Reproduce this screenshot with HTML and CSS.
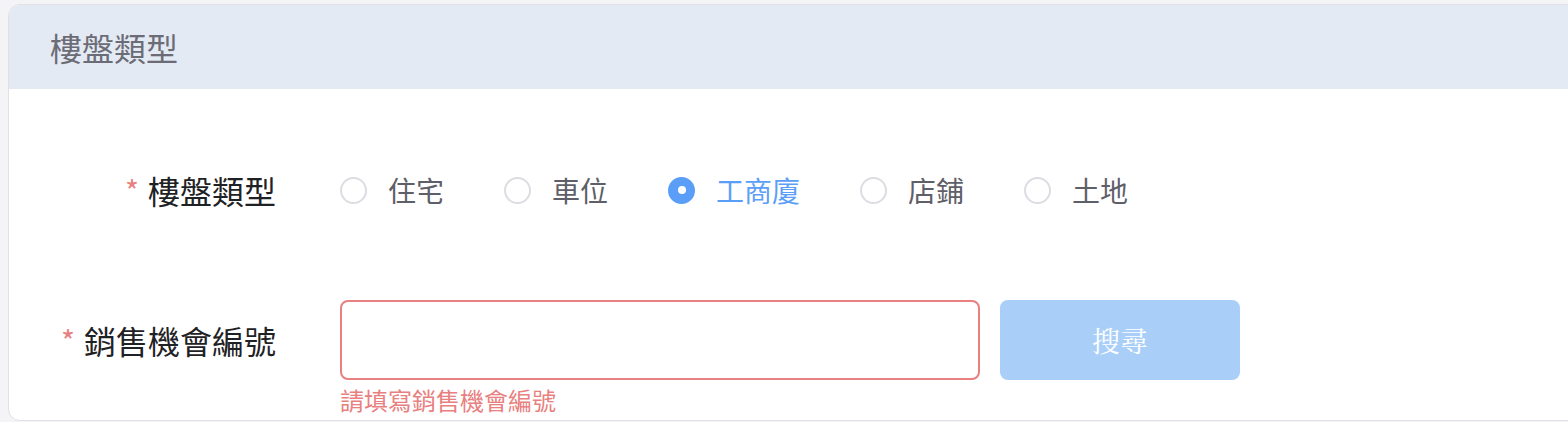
FILE: index.html
```html
<!DOCTYPE html>
<html lang="zh-Hant">
<head>
<meta charset="utf-8">
<title>樓盤類型</title>
<link rel="stylesheet" href="styles.css">
</head>
<body>
<div class="card">
  <div class="card-header">樓盤類型</div>
  <div class="card-body">
    <div class="form-row row-type">
      <div class="label"><span class="req">*</span>樓盤類型</div>
      <div class="control radios">
        <label class="radio"><span class="dot"></span><span class="rtext">住宅</span></label>
        <label class="radio"><span class="dot"></span><span class="rtext">車位</span></label>
        <label class="radio checked"><span class="dot"></span><span class="rtext">工商廈</span></label>
        <label class="radio"><span class="dot"></span><span class="rtext">店鋪</span></label>
        <label class="radio"><span class="dot"></span><span class="rtext">土地</span></label>
      </div>
    </div>
    <div class="form-row row-search">
      <div class="label"><span class="req">*</span>銷售機會編號</div>
      <div class="control">
        <div class="search-line">
          <div class="input"></div>
          <button class="btn" type="button">搜尋</button>
        </div>
        <div class="feedback">請填寫銷售機會編號</div>
      </div>
    </div>
  </div>
</div>
</body>
</html>
```

FILE: styles.css
```css
html, body {
  margin: 0;
  padding: 0;
  overflow: hidden;
}
body {
  background: #f4f4f6;
  padding: 4px 0 0 8px;
  font-family: "Noto Sans CJK TC", "Noto Sans", sans-serif;
}
.card {
  width: 1600px;
  border: 1px solid #e0e0e6;
  border-radius: 12px;
  background: #fff;
  overflow: hidden;
}
.card-header {
  height: 84px;
  background: #e4eaf4;
  display: flex;
  align-items: center;
  padding-left: 41px;
  font-size: 32px;
  color: #6c6c76;
  line-height: 1;
}
.card-body {
  padding: 61px 0 4px 0;
}
.form-row {
  display: grid;
  grid-template-columns: 267px 1fr;
  column-gap: 64px;
}
.row-type {
  height: 80px;
  align-items: center;
  margin-bottom: 70px;
}
.label {
  text-align: right;
  font-size: 32px;
  color: #1f2225;
  line-height: 80px;
  height: 80px;
  white-space: nowrap;
}
.req {
  color: #e88080;
  font-size: 30px;
  margin-right: 9px;
  vertical-align: 1px;
}
.radios {
  display: flex;
  align-items: center;
  height: 80px;
}
.radio {
  display: flex;
  align-items: center;
  margin-right: 60px;
  font-size: 28px;
  color: #5f5f69;
}
.dot {
  width: 27px;
  height: 27px;
  box-sizing: border-box;
  border: 2px solid #dcdce2;
  border-radius: 50%;
  margin-right: 21px;
  display: flex;
  align-items: center;
  justify-content: center;
}
.radio.checked .dot {
  background: #5a9ef8;
  border-color: #5a9ef8;
}
.radio.checked .dot::after {
  content: "";
  width: 8px;
  height: 8px;
  border-radius: 50%;
  background: #fff;
}
.radio.checked {
  color: #5a9ef8;
}
.rtext {
  line-height: 40px;
}
.search-line {
  display: flex;
  gap: 20px;
  height: 80px;
}
.input {
  width: 640px;
  height: 80px;
  box-sizing: border-box;
  border: 2px solid #e88080;
  border-radius: 8px;
  background: #fff;
}
.btn {
  width: 240px;
  height: 80px;
  border: none;
  border-radius: 8px;
  background: #a9cff9;
  color: #fff;
  font-size: 28px;
  font-family: "Noto Serif CJK TC", "Liberation Serif", serif;
  padding: 0;
}
.feedback {
  margin-top: 4px;
  font-size: 24px;
  line-height: 32px;
  color: #e88080;
}
```
